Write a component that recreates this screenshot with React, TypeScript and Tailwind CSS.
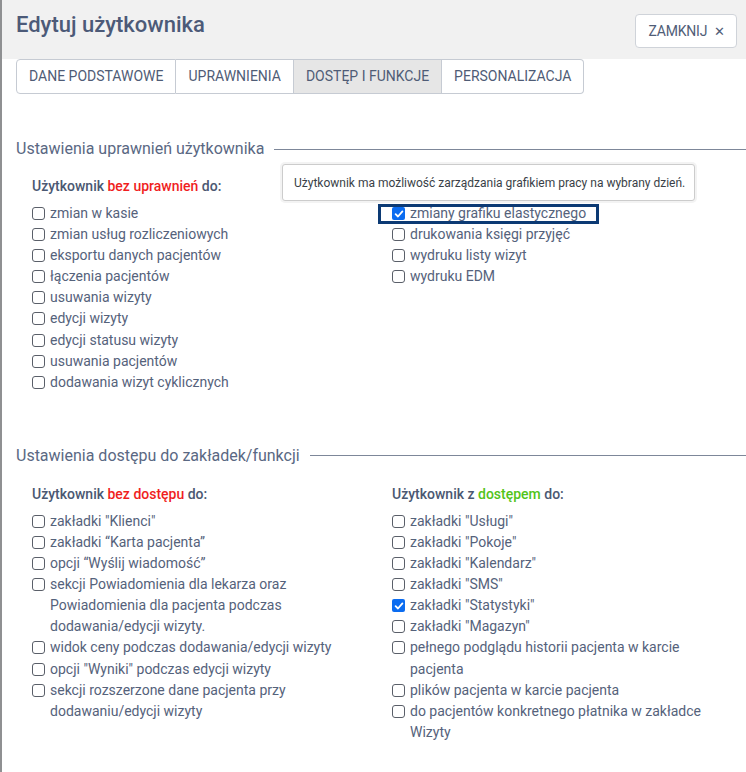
import React from "react";

type Item = { label: string; checked?: boolean; highlight?: boolean };

function Box({ checked }: { checked?: boolean }) {
  if (checked) {
    return (
      <span className="mt-[4px] mr-[5px] flex h-[13px] w-[13px] shrink-0 items-center justify-center rounded-[2px] bg-[#0b6cf0]">
        <svg width="10" height="10" viewBox="0 0 10 10">
          <path d="M1.6 5.2 L4 7.5 L8.4 2.4" fill="none" stroke="#fff" strokeWidth="1.8" strokeLinecap="round" strokeLinejoin="round" />
        </svg>
      </span>
    );
  }
  return <span className="mt-[4px] mr-[5px] h-[13px] w-[13px] shrink-0 rounded-[3px] border border-[#5a5f69] bg-white" />;
}

function Row({ item }: { item: Item }) {
  return (
    <li className="relative flex items-start">
      {item.highlight && (
        <span className="pointer-events-none absolute left-[-14px] top-[1px] h-[20px] w-[221px] border-[3px] border-[#0c3a74]" />
      )}
      <Box checked={item.checked} />
      <span>{item.label}</span>
    </li>
  );
}

function Column({ title, items }: { title: React.ReactNode; items: Item[] }) {
  return (
    <div>
      <div className="mb-[6px] text-[14px] font-medium leading-[21px] text-[#4b5872]">{title}</div>
      <ul className="text-[14px] leading-[21.1px] text-[#55627b]">
        {items.map((it, i) => (
          <Row key={i} item={it} />
        ))}
      </ul>
    </div>
  );
}

function SectionHeading({ children }: { children: React.ReactNode }) {
  return (
    <div className="flex items-center pl-[14px]">
      <span className="text-[16px] leading-[24px] text-[#5a6883]">{children}</span>
      <span className="ml-[10px] h-px flex-1 bg-[#7d8799]" />
    </div>
  );
}

export default function App() {
  const s1left: Item[] = [
    { label: "zmian w kasie" },
    { label: "zmian usług rozliczeniowych" },
    { label: "eksportu danych pacjentów" },
    { label: "łączenia pacjentów" },
    { label: "usuwania wizyty" },
    { label: "edycji wizyty" },
    { label: "edycji statusu wizyty" },
    { label: "usuwania pacjentów" },
    { label: "dodawania wizyt cyklicznych" },
  ];
  const s1right: Item[] = [
    { label: "zmiany grafiku elastycznego", checked: true, highlight: true },
    { label: "drukowania księgi przyjęć" },
    { label: "wydruku listy wizyt" },
    { label: "wydruku EDM" },
  ];
  const s2left: Item[] = [
    { label: 'zakładki "Klienci"' },
    { label: "zakładki “Karta pacjenta”" },
    { label: "opcji “Wyślij wiadomość”" },
    { label: "sekcji Powiadomienia dla lekarza oraz Powiadomienia dla pacjenta podczas dodawania/edycji wizyty." },
    { label: "widok ceny podczas dodawania/edycji wizyty" },
    { label: 'opcji "Wyniki" podczas edycji wizyty' },
    { label: "sekcji rozszerzone dane pacjenta przy dodawaniu/edycji wizyty" },
  ];
  const s2right: Item[] = [
    { label: 'zakładki "Usługi"' },
    { label: 'zakładki "Pokoje"' },
    { label: 'zakładki "Kalendarz"' },
    { label: 'zakładki "SMS"' },
    { label: 'zakładki "Statystyki"', checked: true },
    { label: 'zakładki "Magazyn"' },
    { label: "pełnego podglądu historii pacjenta w karcie pacjenta" },
    { label: "plików pacjenta w karcie pacjenta" },
    { label: "do pacjentów konkretnego płatnika w zakładce Wizyty" },
  ];

  const tabs = ["DANE PODSTAWOWE", "UPRAWNIENIA", "DOSTĘP I FUNKCJE", "PERSONALIZACJA"];

  return (
    <div className="min-h-[772px] border-l-2 border-[#8f9092] bg-white font-['Roboto',sans-serif]">
      {/* header */}
      <div className="flex h-[59px] items-start justify-between bg-[#f1f1f1] pl-[14px] pr-[9px]">
        <h1 className="mt-[9px] text-[22px] font-medium leading-[32px] text-[#4c5a78]">Edytuj użytkownika</h1>
        <button className="mt-[14px] flex h-[34px] items-center gap-[7px] rounded-[4px] border border-[#cfd3d9] bg-white pl-[12px] pr-[11px] text-[14px] tracking-[-0.2px] text-[#505d77]">
          ZAMKNIJ
          <span className="text-[13px] leading-none">✕</span>
        </button>
      </div>

      {/* tabs */}
      <div className="flex pl-[14px]">
        {tabs.map((t, i) => (
          <div
            key={t}
            className={
              "flex h-[35px] items-center border-y border-r px-[12px] text-[14px] text-[#4f5c76] " +
              (i === 0 ? "rounded-l-[4px] border-l border-[#c6cbd3] " : "border-[#c6cbd3] ") +
              (i === 3 ? "rounded-r-[4px] " : "") +
              (i === 2 ? "bg-[#e6e6e6] border-[#b9bec7]" : "bg-white")
            }
          >
            {t}
          </div>
        ))}
      </div>

      {/* section 1 */}
      <div className="mt-[43px]">
        <SectionHeading>Ustawienia uprawnień użytkownika</SectionHeading>
        <div className="relative mt-[15px] grid grid-cols-[360px_1fr] pl-[30px] pr-4">
          <Column
            title={
              <>
                Użytkownik <span className="text-[#f01e1e]">bez uprawnień</span> do:
              </>
            }
            items={s1left}
          />
          <Column
            title={
              <>
                Użytkownik z <span className="text-[#52c41a]">uprawnieniami</span> do:
              </>
            }
            items={s1right}
          />
          <div className="absolute left-[280px] top-[-12px] flex h-[37px] w-[413px] items-center whitespace-nowrap rounded-[3px] border border-[#cccccc] bg-white px-[11px] text-[12px] text-[#3a3f47] shadow-[0_0_0_2px_rgba(240,240,240,0.8)]">
            Użytkownik ma możliwość zarządzania grafikiem pracy na wybrany dzień.
          </div>
        </div>
      </div>

      {/* section 2 */}
      <div className="mt-[51px] pb-8">
        <SectionHeading>Ustawienia dostępu do zakładek/funkcji</SectionHeading>
        <div className="mt-[16px] grid grid-cols-[360px_1fr] pl-[30px] pr-4">
          <div className="pr-[20px]">
            <Column
              title={
                <>
                  Użytkownik <span className="text-[#f01e1e]">bez dostępu</span> do:
                </>
              }
              items={s2left}
            />
          </div>
          <Column
            title={
              <>
                Użytkownik z <span className="text-[#52c41a]">dostępem</span> do:
              </>
            }
            items={s2right}
          />
        </div>
      </div>
    </div>
  );
}
